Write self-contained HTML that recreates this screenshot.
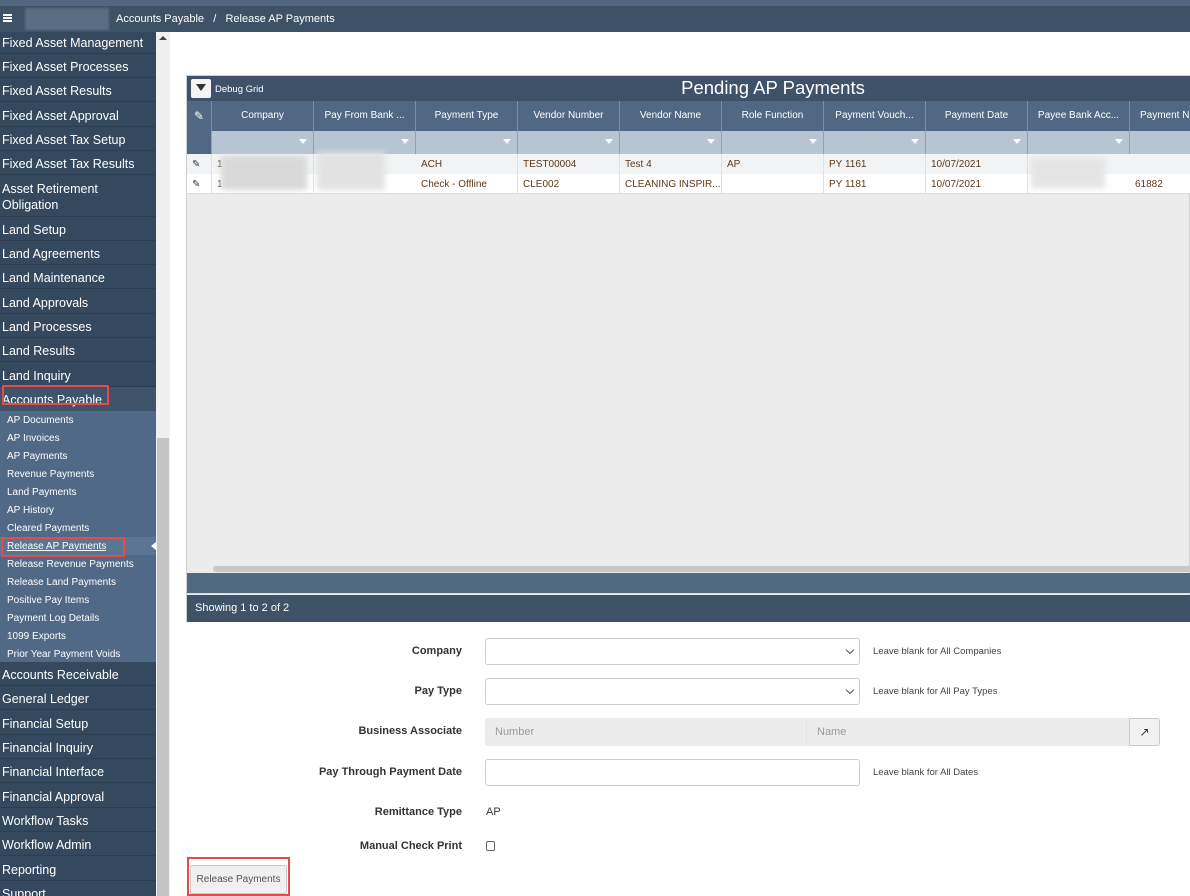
<!DOCTYPE html>
<html style="width:1190px;height:896px;overflow:hidden"><head><meta charset="utf-8"><style>
*{box-sizing:border-box;margin:0;padding:0}
body{width:1190px;height:896px;overflow:hidden;background:#fff;font-family:"Liberation Sans",sans-serif;position:relative}
.a{position:absolute}
.top0{left:0;top:0;width:1190px;height:6px;background:#51677f}
.top{left:0;top:6px;width:1190px;height:26px;background:#3d5167;color:#fff;font-size:11px}
.side{left:0;top:32px;width:156px;height:864px;background:#34495e;overflow:hidden}
.it{position:absolute;left:0;width:156px;height:24px;color:#fff;font-size:12.5px;line-height:26px;padding-left:2px;border-bottom:1px solid #2c3d4f;white-space:nowrap}
.sub{position:absolute;left:0;width:156px;height:18px;color:#fff;font-size:10px;line-height:20px;padding-left:7px;white-space:nowrap}
.grid{left:186px;top:75px;width:1004px;height:547px;border:1px solid #d0d0d0;background:#ececec}
.hd{position:absolute;top:25px;height:30px;background:#506883;color:#fff;font-size:10px;line-height:30px;text-align:center;border-right:1px solid #7990a6;overflow:hidden;white-space:nowrap}
.fl{position:absolute;top:55px;height:23px;background:#b7c5d2;border-right:1px solid #8ea0b2}
.fl i{position:absolute;right:6px;top:8px;width:0;height:0;border-left:4px solid transparent;border-right:4px solid transparent;border-top:5px solid #fff}
.cell{position:absolute;height:20px;font-size:10px;line-height:22px;color:#5b3a1a;padding-left:5px;white-space:nowrap;overflow:hidden;border-right:1px solid #e0e0e0}
.lbl{position:absolute;right:728px;font-size:11px;font-weight:bold;color:#333;text-align:right;white-space:nowrap}
.inp{position:absolute;left:485px;width:375px;height:27px;border:1px solid #ccc;border-radius:3px;background:#fff}
.hint{position:absolute;left:873px;font-size:9.5px;color:#444}
.chev{position:absolute;right:6px;top:8px;width:6px;height:6px;border-right:1px solid #555;border-bottom:1px solid #555;transform:rotate(45deg)}
.blur{position:absolute;background:#d8d8d8;filter:blur(3px)}
</style></head><body>
<div class="a top0"></div>
<div class="a top">
 <div class="a" style="left:3px;top:8px;width:9px;height:2px;background:#fff;box-shadow:0 3px 0 #fff,0 6px 0 #fff"></div>
 <div class="a" style="left:25px;top:2px;width:84px;height:22px;background:#5a6e83;filter:blur(1px)"></div>
 <div class="a" style="left:116px;top:7px">Accounts Payable &nbsp;&nbsp;/&nbsp;&nbsp; Release AP Payments</div>
</div>
<div class="a side">
 <div class="it" style="top:-2px">Fixed Asset Management</div>
 <div class="it" style="top:22px">Fixed Asset Processes</div>
 <div class="it" style="top:46px">Fixed Asset Results</div>
 <div class="it" style="top:71px">Fixed Asset Approval</div>
 <div class="it" style="top:95px">Fixed Asset Tax Setup</div>
 <div class="it" style="top:119px">Fixed Asset Tax Results</div>
 <div class="it" style="top:144px;height:41px;line-height:16px;padding-top:5px">Asset Retirement<br>Obligation</div>
 <div class="it" style="top:185px">Land Setup</div>
 <div class="it" style="top:209px">Land Agreements</div>
 <div class="it" style="top:233px">Land Maintenance</div>
 <div class="it" style="top:258px">Land Approvals</div>
 <div class="it" style="top:282px">Land Processes</div>
 <div class="it" style="top:306px">Land Results</div>
 <div class="it" style="top:331px">Land Inquiry</div>
 <div class="it" style="top:355px;background:#3f546a;border:none">Accounts Payable</div>
 <div class="a" style="left:0;top:379px;width:156px;height:251px;background:#4f6987"></div>
 <div class="sub" style="top:379px">AP Documents</div>
 <div class="sub" style="top:397px">AP Invoices</div>
 <div class="sub" style="top:415px">AP Payments</div>
 <div class="sub" style="top:433px">Revenue Payments</div>
 <div class="sub" style="top:451px">Land Payments</div>
 <div class="sub" style="top:469px">AP History</div>
 <div class="sub" style="top:487px">Cleared Payments</div>
 <div class="sub" style="top:505px;background:#5b7693;text-decoration:underline">Release AP Payments</div>
 <div class="a" style="left:151px;top:510px;width:0;height:0;border-top:4px solid transparent;border-bottom:4px solid transparent;border-right:5px solid #fff"></div>
 <div class="sub" style="top:523px">Release Revenue Payments</div>
 <div class="sub" style="top:541px">Release Land Payments</div>
 <div class="sub" style="top:559px">Positive Pay Items</div>
 <div class="sub" style="top:577px">Payment Log Details</div>
 <div class="sub" style="top:595px">1099 Exports</div>
 <div class="sub" style="top:613px">Prior Year Payment Voids</div>
 <div class="it" style="top:630px">Accounts Receivable</div>
 <div class="it" style="top:654px">General Ledger</div>
 <div class="it" style="top:679px">Financial Setup</div>
 <div class="it" style="top:703px">Financial Inquiry</div>
 <div class="it" style="top:727px">Financial Interface</div>
 <div class="it" style="top:752px">Financial Approval</div>
 <div class="it" style="top:776px">Workflow Tasks</div>
 <div class="it" style="top:800px">Workflow Admin</div>
 <div class="it" style="top:825px">Reporting</div>
 <div class="it" style="top:849px;border:none;height:15px">Support</div>
</div>
<div class="a" style="left:2px;top:385px;width:107px;height:20px;border:2px solid #e84a4a"></div>
<div class="a" style="left:1px;top:537px;width:124px;height:20px;border:2px solid #e84a4a"></div>
<div class="a" style="left:156px;top:32px;width:14px;height:864px;background:#f0f0f0"></div>
<div class="a" style="left:159px;top:36px;width:0;height:0;border-left:4px solid transparent;border-right:4px solid transparent;border-bottom:4px solid #444"></div>
<div class="a" style="left:157px;top:438px;width:12px;height:458px;background:#c4c4c4"></div>

<div class="a grid">
 <div class="a" style="left:0;top:0;width:1004px;height:25px;background:#3e5369"></div>
 <div class="a" style="left:4px;top:3px;width:20px;height:19px;background:#f4f4f4;border-radius:2px"></div>
 <div class="a" style="left:9px;top:8px;width:0;height:0;border-left:5px solid transparent;border-right:5px solid transparent;border-top:7px solid #333"></div>
 <div class="a" style="left:28px;top:8px;color:#fff;font-size:9.5px">Debug Grid</div>
 <div class="a" style="left:0;top:1px;width:1004px;text-align:center;color:#fff;font-size:18.5px;padding-left:168px">Pending AP Payments</div>
 <div class="hd" style="left:0;width:25px;font-size:12px">&#9998;</div>
 <div class="fl" style="left:0;width:25px;background:#506883"></div>
 <div class="hd" style="left:25px;width:102px">Company</div>
 <div class="hd" style="left:127px;width:102px">Pay From Bank ...</div>
 <div class="hd" style="left:229px;width:102px">Payment Type</div>
 <div class="hd" style="left:331px;width:102px">Vendor Number</div>
 <div class="hd" style="left:433px;width:102px">Vendor Name</div>
 <div class="hd" style="left:535px;width:102px">Role Function</div>
 <div class="hd" style="left:637px;width:102px">Payment Vouch...</div>
 <div class="hd" style="left:739px;width:102px">Payment Date</div>
 <div class="hd" style="left:841px;width:102px">Payee Bank Acc...</div>
 <div class="hd" style="left:943px;width:70px;text-align:left;padding-left:10px">Payment N</div>
 <div class="fl" style="left:25px;width:102px"><i></i></div>
 <div class="fl" style="left:127px;width:102px"><i></i></div>
 <div class="fl" style="left:229px;width:102px"><i></i></div>
 <div class="fl" style="left:331px;width:102px"><i></i></div>
 <div class="fl" style="left:433px;width:102px"><i></i></div>
 <div class="fl" style="left:535px;width:102px"><i></i></div>
 <div class="fl" style="left:637px;width:102px"><i></i></div>
 <div class="fl" style="left:739px;width:102px"><i></i></div>
 <div class="fl" style="left:841px;width:102px"><i></i></div>
 <div class="fl" style="left:943px;width:70px"></div>
 <div class="a" style="left:0;top:78px;width:1004px;height:20px;background:#f1f3f5"></div>
 <div class="a" style="left:0;top:98px;width:1004px;height:20px;background:#fff;border-bottom:1px solid #ddd"></div>
 <div class="cell" style="left:0;top:78px;width:25px;color:#333">&#9998;</div>
 <div class="cell" style="left:0;top:98px;width:25px;color:#333">&#9998;</div>
 <div class="cell" style="left:25px;top:78px;width:102px">1</div>
 <div class="cell" style="left:25px;top:98px;width:102px">1</div>
 <div class="blur" style="left:34px;top:80px;width:86px;height:34px"></div>
 <div class="blur" style="left:130px;top:76px;width:68px;height:38px;background:#e2e2e2"></div>
 <div class="cell" style="left:229px;top:78px;width:102px">ACH</div>
 <div class="cell" style="left:229px;top:98px;width:102px">Check - Offline</div>
 <div class="cell" style="left:331px;top:78px;width:102px">TEST00004</div>
 <div class="cell" style="left:331px;top:98px;width:102px">CLE002</div>
 <div class="cell" style="left:433px;top:78px;width:102px">Test 4</div>
 <div class="cell" style="left:433px;top:98px;width:102px">CLEANING INSPIR...</div>
 <div class="cell" style="left:535px;top:78px;width:102px">AP</div>
 <div class="cell" style="left:535px;top:98px;width:102px"></div>
 <div class="cell" style="left:637px;top:78px;width:102px">PY 1161</div>
 <div class="cell" style="left:637px;top:98px;width:102px">PY 1181</div>
 <div class="cell" style="left:739px;top:78px;width:102px">10/07/2021</div>
 <div class="cell" style="left:739px;top:98px;width:102px">10/07/2021</div>
 <div class="blur" style="left:844px;top:82px;width:74px;height:30px;background:#e4e4e4"></div>
 <div class="cell" style="left:943px;top:98px;width:70px">61882</div>
 <div class="a" style="left:26px;top:490px;width:978px;height:6px;background:#c8c8c8;border-radius:3px"></div>
 <div class="a" style="left:0;top:497px;width:1004px;height:21px;background:#516a84;border-bottom:1px solid #ddd"></div>
 <div class="a" style="left:0;top:519px;width:1004px;height:27px;background:#3e5368;color:#fff;font-size:11px;line-height:27px;padding-left:8px">Showing 1 to 2 of 2</div>
</div>

<div class="lbl" style="top:645px">Company</div>
<div class="inp" style="top:638px"><div class="chev"></div></div>
<div class="hint" style="top:646px">Leave blank for All Companies</div>
<div class="lbl" style="top:685px">Pay Type</div>
<div class="inp" style="top:678px"><div class="chev"></div></div>
<div class="hint" style="top:686px">Leave blank for All Pay Types</div>
<div class="lbl" style="top:725px">Business Associate</div>
<div class="a" style="left:485px;top:718px;width:644px;height:28px;background:#ececec;border-radius:3px 0 0 3px"></div>
<div class="a" style="left:806px;top:718px;width:1px;height:28px;background:#e2e2e2"></div>
<div class="a" style="left:495px;top:726px;font-size:11px;color:#999">Number</div>
<div class="a" style="left:817px;top:726px;font-size:11px;color:#999">Name</div>
<div class="a" style="left:1129px;top:718px;width:31px;height:28px;background:#f2f2f2;border:1px solid #ccc;border-radius:0 3px 3px 0;font-size:12px;text-align:center;line-height:26px;color:#333">&#8599;</div>
<div class="lbl" style="top:766px">Pay Through Payment Date</div>
<div class="inp" style="top:759px"></div>
<div class="hint" style="top:767px">Leave blank for All Dates</div>
<div class="lbl" style="top:806px">Remittance Type</div>
<div class="a" style="left:486px;top:806px;font-size:11px;color:#333">AP</div>
<div class="lbl" style="top:840px">Manual Check Print</div>
<div class="a" style="left:486px;top:841px;width:9px;height:10px;border:1px solid #666;border-radius:2px"></div>
<div class="a" style="left:187px;top:857px;width:103px;height:39px;border:2px solid #e84a4a"></div>
<div class="a" style="left:190px;top:865px;width:97px;height:29px;background:#f0f0f0;border:1px solid #ccc;border-radius:2px;font-size:10px;color:#555;text-align:center;line-height:27px">Release Payments</div>
</body></html>
